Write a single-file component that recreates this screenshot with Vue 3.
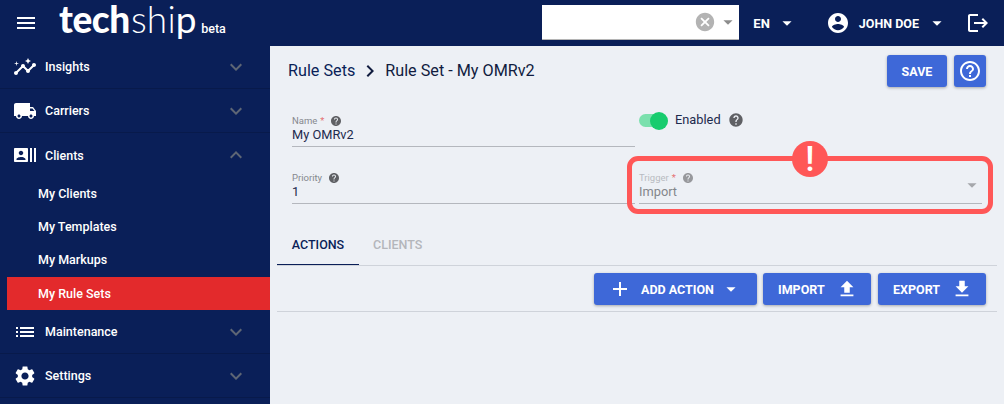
<script setup>
const icons = {
  menu: 'M3 18h18v-2H3v2zm0-5h18v-2H3v2zm0-7v2h18V6H3z',
  insights: 'M21 8c-1.45 0-2.26 1.44-1.93 2.51l-3.55 3.56c-.3-.09-.74-.09-1.04 0l-2.55-2.55C12.27 10.45 11.46 9 10 9c-1.45 0-2.27 1.44-1.93 2.52l-4.56 4.55C2.44 15.74 1 16.55 1 18c0 1.1.9 2 2 2 1.45 0 2.26-1.44 1.93-2.51l4.55-4.56c.3.09.74.09 1.04 0l2.55 2.55C12.73 16.55 13.54 18 15 18c1.45 0 2.27-1.44 1.93-2.52l3.56-3.55c1.07.33 2.51-.48 2.51-1.93 0-1.1-.9-2-2-2zM15 9l.94-2.07L18 6l-2.06-.93L15 3l-.92 2.07L12 6l2.08.93zM3.5 11L4 9l2-.5L4 8l-.5-2L3 8l-2 .5L3 9z',
  truck: 'M20 8h-3V4H3c-1.1 0-2 .9-2 2v11h2c0 1.66 1.34 3 3 3s3-1.34 3-3h6c0 1.66 1.34 3 3 3s3-1.34 3-3h2v-5l-3-4zM6 18.5c-.83 0-1.5-.67-1.5-1.5s.67-1.5 1.5-1.5 1.5.67 1.5 1.5-.67 1.5-1.5 1.5zm13.5-9l1.96 2.5H17V9.5h2.5zm-1.5 9c-.83 0-1.5-.67-1.5-1.5s.67-1.5 1.5-1.5 1.5.67 1.5 1.5-.67 1.5-1.5 1.5z',
  clients: 'M21 5v14h2V5h-2zm-4 14h2V5h-2v14zM14 5H2c-.55 0-1 .45-1 1v12c0 .55.45 1 1 1h12c.55 0 1-.45 1-1V6c0-.55-.45-1-1-1zM8 7.75c1.24 0 2.25 1.01 2.25 2.25S9.24 12.25 8 12.25 5.75 11.24 5.75 10 6.76 7.75 8 7.75zM12.5 17h-9v-.75c0-1.5 3-2.25 4.5-2.25s4.5.75 4.5 2.25V17z',
  list: 'M3 13h2v-2H3v2zm0 4h2v-2H3v2zm0-8h2V7H3v2zm4 4h14v-2H7v2zm0 4h14v-2H7v2zM7 7v2h14V7H7z',
  settings: 'M19.14 12.94c.04-.3.06-.61.06-.94 0-.32-.02-.64-.07-.94l2.03-1.58c.18-.14.23-.41.12-.61l-1.92-3.32c-.12-.22-.37-.29-.59-.22l-2.39.96c-.5-.38-1.03-.7-1.62-.94l-.36-2.54c-.04-.24-.24-.41-.48-.41h-3.84c-.24 0-.43.17-.47.41l-.36 2.54c-.59.24-1.13.57-1.62.94l-2.39-.96c-.22-.08-.47 0-.59.22L2.74 8.87c-.12.21-.08.47.12.61l2.03 1.58c-.05.3-.09.63-.09.94s.02.64.07.94l-2.03 1.58c-.18.14-.23.41-.12.61l1.92 3.32c.12.22.37.29.59.22l2.39-.96c.5.38 1.03.7 1.62.94l.36 2.54c.05.24.24.41.48.41h3.84c.24 0 .44-.17.47-.41l.36-2.54c.59-.24 1.13-.56 1.62-.94l2.39.96c.22.08.47 0 .59-.22l1.92-3.32c.12-.22.07-.47-.12-.61l-2.01-1.58zM12 15.6c-1.98 0-3.6-1.62-3.6-3.6s1.62-3.6 3.6-3.6 3.6 1.62 3.6 3.6-1.62 3.6-3.6 3.6z',
  down: 'M16.59 8.59L12 13.17 7.41 8.59 6 10l6 6 6-6z',
  up: 'M12 8l-6 6 1.41 1.41L12 10.83l4.59 4.58L18 14z',
  cancel: 'M12 2C6.47 2 2 6.47 2 12s4.47 10 10 10 10-4.47 10-10S17.53 2 12 2zm5 13.59L15.59 17 12 13.41 8.41 17 7 15.59 10.59 12 7 8.41 8.41 7 12 10.59 15.59 7 17 8.41 13.41 12 17 15.59z',
  caret: 'M7 10l5 5 5-5z',
  account: 'M12 2C6.48 2 2 6.48 2 12s4.48 10 10 10 10-4.48 10-10S17.52 2 12 2zm0 3c1.66 0 3 1.34 3 3s-1.34 3-3 3-3-1.34-3-3 1.34-3 3-3zm0 14.2c-2.5 0-4.71-1.28-6-3.22.03-1.99 4-3.08 6-3.08 1.99 0 5.97 1.09 6 3.08-1.29 1.94-3.5 3.22-6 3.22z',
  logout: 'M17 7l-1.41 1.41L18.17 11H8v2h10.17l-2.58 2.58L17 17l5-5zM4 5h8V3H4c-1.1 0-2 .9-2 2v14c0 1.1.9 2 2 2h8v-2H4V5z',
  helpOutline: 'M11 18h2v-2h-2v2zm1-16C6.48 2 2 6.48 2 12s4.48 10 10 10 10-4.48 10-10S17.52 2 12 2zm0 18c-4.41 0-8-3.59-8-8s3.59-8 8-8 8 3.59 8 8-3.59 8-8 8zm0-14c-2.21 0-4 1.79-4 4h2c0-1.1.9-2 2-2s2 .9 2 2c0 2-3 1.75-3 5h2c0-2.25 3-2.5 3-5 0-2.21-1.79-4-4-4z',
  help: 'M12 2C6.48 2 2 6.48 2 12s4.48 10 10 10 10-4.48 10-10S17.52 2 12 2zm1 17h-2v-2h2v2zm2.07-7.75l-.9.92C13.45 12.9 13 13.5 13 15h-2v-.5c0-1.1.45-2.1 1.17-2.83l1.24-1.26c.37-.36.59-.86.59-1.41 0-1.1-.9-2-2-2s-2 .9-2 2H8c0-2.21 1.79-4 4-4s4 1.79 4 4c0 .88-.36 1.68-.93 2.25z',
  add: 'M19 13h-6v6h-2v-6H5v-2h6V5h2v6h6v2z',
  upload: 'M9 16h6v-6h4l-7-7-7 7h4zm-4 2h14v2H5z',
  download: 'M19 9h-4V3H9v6H5l7 7 7-7zM5 18v2h14v-2H5z',
  next: 'M10 6L8.59 7.41 13.17 12l-4.58 4.59L10 18l6-6z'
}

const navTop = [
  { label: 'Insights', icon: 'insights', chevron: 'down' },
  { label: 'Carriers', icon: 'truck', chevron: 'down' },
  { label: 'Clients', icon: 'clients', chevron: 'up' }
]
const subItems = ['My Clients', 'My Templates', 'My Markups', 'My Rule Sets']
const navBottom = [
  { label: 'Maintenance', icon: 'list', chevron: 'down' },
  { label: 'Settings', icon: 'settings', chevron: 'down' }
]
</script>

<template>
  <div class="app">
    <header class="topbar">
      <svg class="menu-icon" viewBox="0 0 24 24"><path :d="icons.menu" /></svg>
      <div class="logo">
        <span class="logo-bold">tech</span><span class="logo-light">shi</span><span class="logo-p">p</span>
        <span class="logo-beta">beta</span>
      </div>
      <div class="search">
        <svg class="search-clear" viewBox="0 0 24 24"><path :d="icons.cancel" /></svg>
        <svg class="search-caret" viewBox="0 0 24 24"><path :d="icons.caret" /></svg>
      </div>
      <div class="lang">
        <span>EN</span>
        <svg viewBox="0 0 24 24"><path :d="icons.caret" /></svg>
      </div>
      <div class="user">
        <svg class="user-icon" viewBox="0 0 24 24"><path :d="icons.account" /></svg>
        <span>JOHN DOE</span>
        <svg class="user-caret" viewBox="0 0 24 24"><path :d="icons.caret" /></svg>
      </div>
      <svg class="logout" viewBox="0 0 24 24"><path :d="icons.logout" /></svg>
    </header>

    <div class="body">
      <nav class="sidebar">
        <div v-for="item in navTop" :key="item.label" class="nav-row">
          <svg class="nav-icon" viewBox="0 0 24 24"><path :d="icons[item.icon]" /></svg>
          <span class="nav-label">{{ item.label }}</span>
          <svg class="chevron" viewBox="0 0 24 24"><path :d="icons[item.chevron]" /></svg>
        </div>
        <div
          v-for="sub in subItems"
          :key="sub"
          class="sub-row"
          :class="{ active: sub === 'My Rule Sets' }"
        >
          {{ sub }}
        </div>
        <div v-for="item in navBottom" :key="item.label" class="nav-row">
          <svg class="nav-icon" viewBox="0 0 24 24"><path :d="icons[item.icon]" /></svg>
          <span class="nav-label">{{ item.label }}</span>
          <svg class="chevron" viewBox="0 0 24 24"><path :d="icons[item.chevron]" /></svg>
        </div>
      </nav>

      <main class="main">
        <div class="title-row">
          <div class="crumbs">
            <span class="crumb-link">Rule Sets</span>
            <svg viewBox="0 0 24 24"><path :d="icons.next" /></svg>
            <span>Rule Set - My OMRv2</span>
          </div>
          <button class="btn save">SAVE</button>
          <button class="btn help-btn">
            <svg viewBox="0 0 24 24"><path :d="icons.helpOutline" /></svg>
          </button>
        </div>

        <div class="form">
          <div class="field">
            <div class="field-label">
              Name <em>*</em>
              <svg class="hint" viewBox="0 0 24 24"><path :d="icons.help" /></svg>
            </div>
            <div class="field-value">My OMRv2</div>
          </div>
          <div class="toggle-field">
            <span class="toggle"><i></i></span>
            <span class="toggle-text">Enabled</span>
            <svg class="toggle-hint" viewBox="0 0 24 24"><path :d="icons.help" /></svg>
          </div>
          <div class="field">
            <div class="field-label">
              Priority
              <svg class="hint" viewBox="0 0 24 24"><path :d="icons.help" /></svg>
            </div>
            <div class="field-value">1</div>
          </div>
          <div class="field disabled">
            <div class="field-label">
              Trigger <em>*</em>
              <svg class="hint" viewBox="0 0 24 24"><path :d="icons.help" /></svg>
            </div>
            <div class="field-value">Import</div>
            <svg class="field-caret" viewBox="0 0 24 24"><path :d="icons.caret" /></svg>
            <div class="alert-box"></div>
            <div class="alert-dot">!</div>
          </div>
        </div>

        <div class="tabs">
          <div class="tab active">ACTIONS</div>
          <div class="tab">CLIENTS</div>
        </div>

        <div class="toolbar">
          <button class="btn add">
            <svg class="add-plus" viewBox="0 0 24 24"><path :d="icons.add" /></svg>
            <span>ADD ACTION</span>
            <svg class="add-caret" viewBox="0 0 24 24"><path :d="icons.caret" /></svg>
          </button>
          <button class="btn io">
            <span>IMPORT</span>
            <svg viewBox="0 0 24 24"><path :d="icons.upload" /></svg>
          </button>
          <button class="btn io export">
            <span>EXPORT</span>
            <svg viewBox="0 0 24 24"><path :d="icons.download" /></svg>
          </button>
        </div>
      </main>
    </div>
  </div>
</template>

<style scoped>
.app {
  width: 1004px;
  height: 404px;
  display: flex;
  flex-direction: column;
  overflow: hidden;
  font-family: Roboto, "Liberation Sans", sans-serif;
  background: #edf0f5;
}

svg {
  display: block;
  flex: none;
  fill: currentColor;
}

/* Barra superior */
.topbar {
  height: 46px;
  flex: none;
  display: flex;
  align-items: center;
  background: #0a1f58;
  color: #fff;
}

.menu-icon {
  width: 24px;
  height: 24px;
  margin-left: 14px;
}

.logo {
  width: 170px;
  margin-left: 21px;
  margin-top: -8px;
  display: flex;
  align-items: baseline;
  font-family: Lato, "Noto Sans", sans-serif;
  font-size: 37px;
  line-height: 36px;
  letter-spacing: -0.4px;
}

.logo-bold {
  font-weight: 900;
}

.logo-light {
  margin-left: 1px;
  font-weight: 300;
  letter-spacing: 0.2px;
}

.logo-p {
  font-weight: 400;
}

.logo-beta {
  margin-left: 5px;
  font-family: Roboto, sans-serif;
  font-size: 12.5px;
  line-height: 14px;
  font-weight: 500;
  letter-spacing: 0;
}

.search {
  width: 197px;
  height: 35px;
  margin-left: auto;
  box-sizing: border-box;
  display: flex;
  align-items: center;
  justify-content: flex-end;
  background: #fff;
  border-bottom: 1px solid #b5b5b5;
  margin-top: -1px;
}

.search-clear {
  width: 22px;
  height: 22px;
  color: #b3b3b3;
  margin-right: 1px;
}

.search-caret {
  width: 22px;
  height: 22px;
  color: #8c8c8c;
}

.lang,
.user {
  display: flex;
  align-items: center;
  font-size: 13px;
  font-weight: 700;
}

.lang {
  margin-left: 14px;
}

.lang svg {
  width: 22px;
  height: 22px;
  margin-left: 6px;
}

.user {
  margin-left: 28px;
  font-size: 12.5px;
}

.user-icon {
  width: 24px;
  height: 24px;
  margin-right: 9px;
}

.user-caret {
  width: 22px;
  height: 22px;
  margin-left: 7px;
}

.logout {
  width: 24px;
  height: 24px;
  margin-left: 18px;
  margin-right: 14px;
}

/* Menu lateral */
.body {
  flex: 1;
  display: flex;
  min-height: 0;
}

.sidebar {
  width: 270px;
  flex: none;
  margin-top: -1px;
  background: #0a1f58;
  color: #fff;
}

.nav-row {
  height: 44px;
  box-sizing: border-box;
  display: flex;
  align-items: center;
  padding: 0 22px 0 13px;
  border-bottom: 1px solid #081a4b;
}

.nav-row:nth-child(3) {
  border-bottom: none;
}

.nav-icon {
  width: 24px;
  height: 24px;
}

.nav-label {
  flex: 1;
  margin-left: 8px;
  font-size: 12.5px;
  font-weight: 500;
}

.chevron {
  width: 24px;
  height: 24px;
  color: #5e6675;
}

.sub-row {
  height: 33.33px;
  box-sizing: border-box;
  display: flex;
  align-items: center;
  margin-left: 7px;
  padding: 0 0 1px 31px;
  font-size: 12.5px;
  font-weight: 500;
}

.sub-row.active {
  background: #e32a2c;
}

/* Conteudo */
.main {
  flex: 1;
  min-width: 0;
  padding: 9px 7px 0;
  color: #0a1f58;
}

.title-row {
  height: 32px;
  display: flex;
  align-items: center;
  padding: 0 11px;
}

.crumbs {
  flex: 1;
  display: flex;
  align-items: center;
  margin-top: -2px;
  font-size: 16.2px;
  color: #111c3f;
}

.crumb-link {
  color: #0a1f58;
}

.crumbs svg {
  width: 24px;
  height: 24px;
  margin: 2px 3px 0 3px;
}

.btn {
  height: 32px;
  border: none;
  border-radius: 3px;
  display: flex;
  align-items: center;
  padding: 0;
  background: #3e68d8;
  color: #fff;
  font-family: inherit;
  font-size: 12.5px;
  font-weight: 700;
  box-shadow: 0 1px 3px rgba(0, 0, 0, 0.3);
}

.save {
  width: 60px;
  justify-content: center;
}

.help-btn {
  width: 32px;
  margin-left: 7px;
  justify-content: center;
}

.help-btn svg {
  width: 24px;
  height: 24px;
}

.form {
  display: grid;
  grid-template-columns: 343px 343px;
  column-gap: 4px;
  row-gap: 24px;
  margin-top: 27px;
  padding-left: 15px;
}

.field {
  position: relative;
  height: 33px;
  box-sizing: border-box;
  border-bottom: 1px solid #b4b7bd;
}

.field-label {
  display: flex;
  align-items: center;
  height: 13px;
  font-size: 9.5px;
  color: #85888e;
  gap: 3px;
}

.field-label em {
  font-style: normal;
  color: #e57373;
}

.hint {
  width: 12px;
  height: 12px;
  color: #5f6064;
  margin-left: 3px;
}

.field-value {
  font-size: 12.8px;
  line-height: 16px;
  color: #1d2a4d;
}

.disabled .field-label {
  color: #b8bbc1;
}

.disabled .hint {
  color: #97989c;
}

.disabled .field-value {
  color: #84868b;
}

.field-caret {
  position: absolute;
  right: -1px;
  top: 3px;
  width: 22px;
  height: 22px;
  color: #a5a7ab;
}

.alert-box {
  position: absolute;
  left: -12px;
  right: -11px;
  top: -15px;
  bottom: -11px;
  box-sizing: border-box;
  border: 5px solid #ff5757;
  border-radius: 11px;
}

.alert-dot {
  position: absolute;
  left: 153px;
  top: -30px;
  width: 36px;
  height: 36px;
  border-radius: 50%;
  background: #ff5757;
  color: #fff;
  display: flex;
  align-items: center;
  justify-content: center;
  font-size: 35px;
  font-weight: 500;
  line-height: 1;
}

.toggle-field {
  display: flex;
  align-items: flex-start;
  margin-top: -4px;
  height: 37px;
}

.toggle {
  position: relative;
  width: 21px;
  height: 13px;
  margin-top: 4px;
  border-radius: 7px;
  background: #7be0ad;
}

.toggle i {
  position: absolute;
  left: 11px;
  top: -2.5px;
  width: 18px;
  height: 18px;
  border-radius: 50%;
  background: #18cc6e;
}

.toggle-text {
  margin-left: 15px;
  margin-top: 2px;
  font-size: 12.8px;
  line-height: 16px;
  color: #1d2a4d;
}

.toggle-hint {
  width: 16px;
  height: 16px;
  margin: 2px 0 0 7px;
  color: #5f6064;
}

.tabs {
  display: flex;
  margin-top: 25px;
  height: 37px;
  box-sizing: border-box;
  border-bottom: 1px solid #cfd3da;
}

.tab {
  height: 36px;
  box-sizing: border-box;
  padding: 0 14px 6px 14px;
  display: flex;
  align-items: center;
  justify-content: center;
  font-size: 12.5px;
  font-weight: 500;
  color: #b4b6bb;
}

.tab.active {
  width: 82px;
  padding: 0 0 5px;
  color: #0a1f58;
  border-bottom: 1px solid #0a1f58;
}

.toolbar {
  height: 46px;
  box-sizing: border-box;
  display: flex;
  justify-content: flex-end;
  gap: 6px;
  padding: 7px 11px 0 0;
  border-bottom: 1px solid #cfd3da;
}

.add {
  width: 163px;
  padding-left: 14px;
}

.add-plus {
  width: 24px;
  height: 24px;
}

.add span {
  margin-left: 9px;
}

.add-caret {
  width: 22px;
  height: 22px;
  margin-left: 6px;
}

.io {
  width: 108px;
  padding-left: 15px;
}

.io svg {
  width: 22px;
  height: 22px;
  margin-left: 11px;
}

.export {
  margin-left: 1px;
}
</style>

<style>
html,
body {
  margin: 0;
  overflow: hidden;
}
</style>
